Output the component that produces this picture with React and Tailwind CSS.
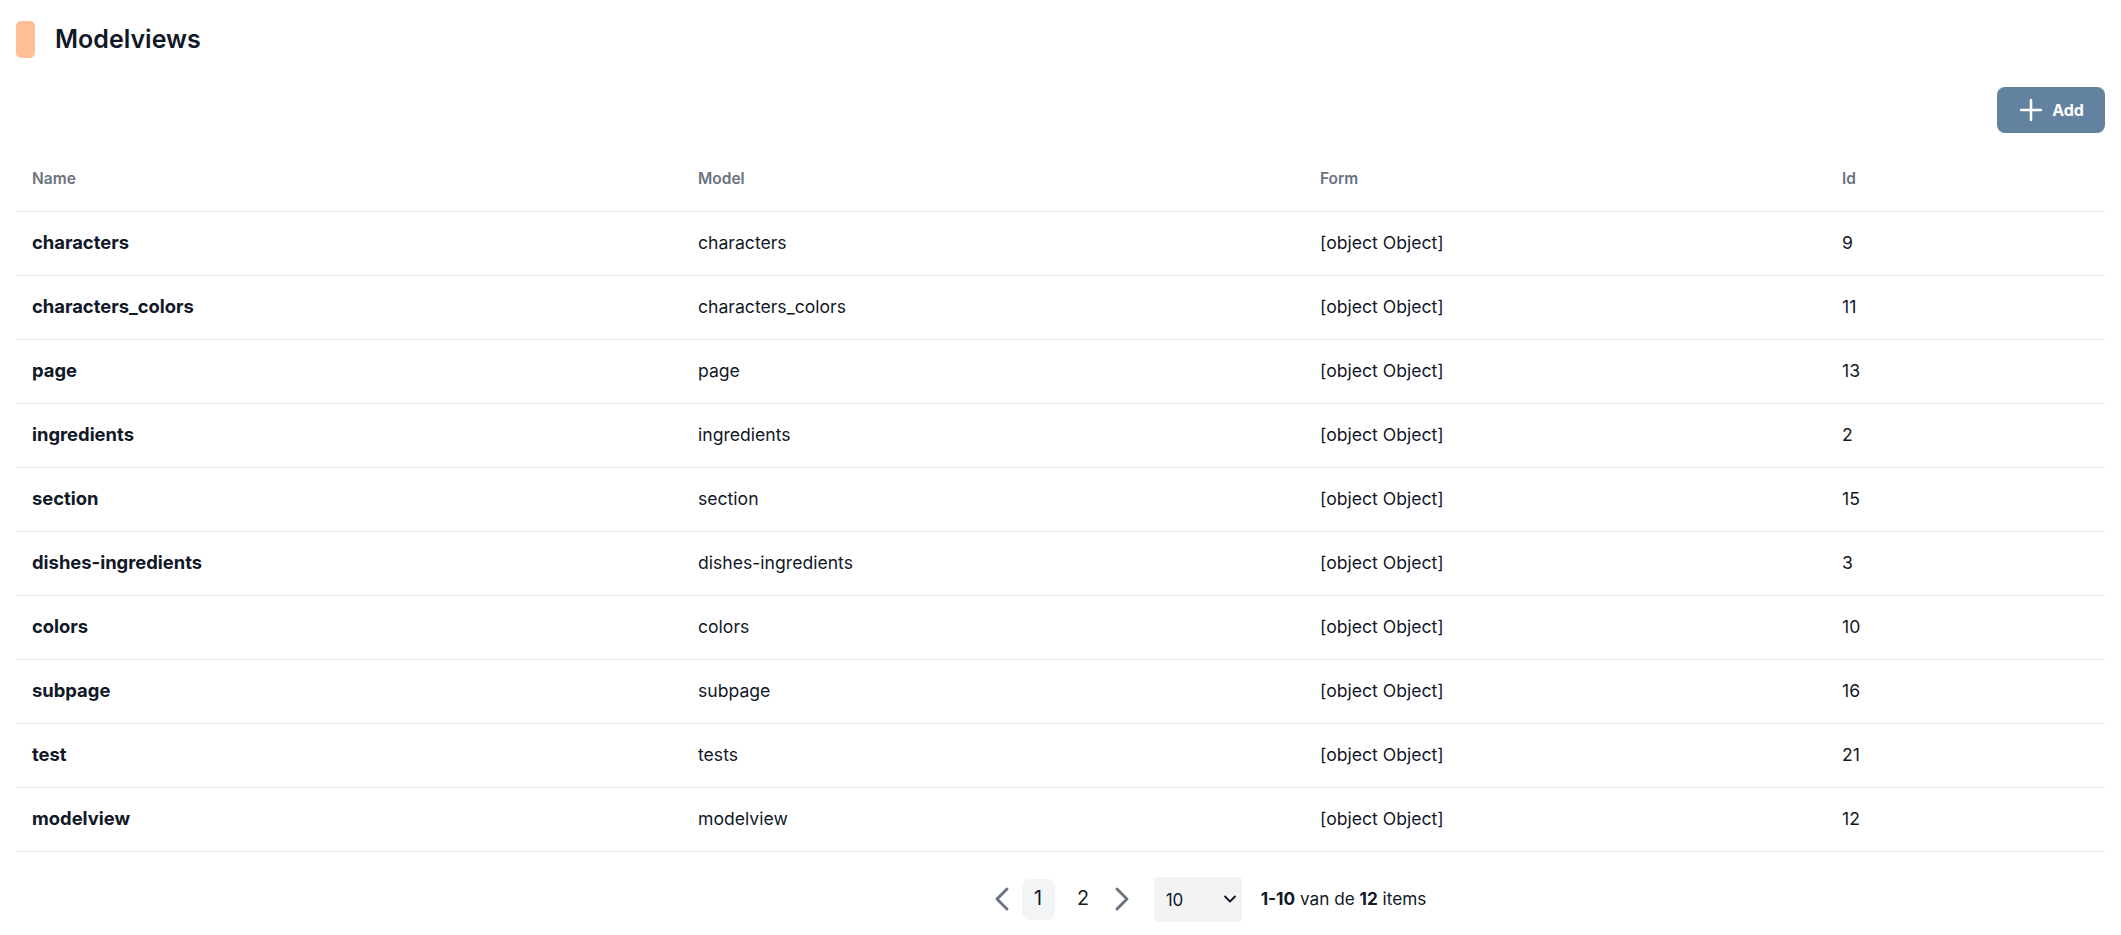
import { ChevronDown, ChevronLeft, ChevronRight, Plus } from 'lucide-react'

const rows = [
  { name: 'characters', model: 'characters', id: 9 },
  { name: 'characters_colors', model: 'characters_colors', id: 11 },
  { name: 'page', model: 'page', id: 13 },
  { name: 'ingredients', model: 'ingredients', id: 2 },
  { name: 'section', model: 'section', id: 15 },
  { name: 'dishes-ingredients', model: 'dishes-ingredients', id: 3 },
  { name: 'colors', model: 'colors', id: 10 },
  { name: 'subpage', model: 'subpage', id: 16 },
  { name: 'test', model: 'tests', id: 21 },
  { name: 'modelview', model: 'modelview', id: 12 },
]

function App() {
  return (
    <div className="min-h-screen bg-white px-4 text-[#111827]" style={{ fontFamily: 'Inter, "Noto Sans", sans-serif' }}>
      <header className="flex h-[77px] items-center gap-5 pt-[2px]">
        <span className="block h-[37px] w-[19px] rounded-[5px] bg-[#ffbf99]" />
        <h1 className="text-[25px] font-semibold">Modelviews</h1>
      </header>

      <div className="flex justify-end pt-[10px]">
        <button
          className="inline-flex h-[46px] w-[108px] items-center justify-center gap-1 rounded-[8px] bg-[#6382a0] pr-1 text-[16px] font-bold text-white"
          type="button"
        >
          <Plus size={34} strokeWidth={1.8} aria-hidden="true" />
          <span>Add</span>
        </button>
      </div>

      <table className="mt-[14px] w-[2089px] table-fixed border-collapse">
        <colgroup>
          <col className="w-[666px]" />
          <col className="w-[622px]" />
          <col className="w-[522px]" />
          <col className="w-[279px]" />
        </colgroup>
        <thead>
          <tr className="h-[64px] border-b border-[#e8e8e8] text-left text-[15.5px] text-[#6b7280]">
            <th className="px-4 font-semibold">Name</th>
            <th className="px-4 font-semibold">Model</th>
            <th className="px-4 font-semibold">Form</th>
            <th className="px-4 font-semibold">Id</th>
          </tr>
        </thead>
        <tbody>
          {rows.map((row) => (
            <tr className="h-[64px] border-b border-[#e8e8e8]" key={row.id}>
              <td className="px-4 text-[18.4px] font-bold">{row.name}</td>
              <td className="px-4 text-[17.6px]">{row.model}</td>
              <td className="px-4 text-[17.6px]">[object Object]</td>
              <td className="px-4 text-[17.6px]">{row.id}</td>
            </tr>
          ))}
        </tbody>
      </table>

      <div className="flex items-center justify-center pl-[287px] pt-[25px]">
        <button className="flex h-[41px] w-[40px] items-center justify-center text-[#6b7280]" type="button">
          <ChevronLeft size={40} strokeWidth={1.7} aria-hidden="true" />
        </button>
        <button className="h-[41px] w-[33px] rounded-[8px] bg-[#f3f4f6] text-[19.8px]" type="button">
          1
        </button>
        <button className="ml-[12px] h-[41px] w-[33px] text-[19.8px]" type="button">
          2
        </button>
        <button className="ml-[2px] flex h-[41px] w-[40px] items-center justify-center text-[#6b7280]" type="button">
          <ChevronRight size={40} strokeWidth={1.7} aria-hidden="true" />
        </button>
        <div className="ml-[12px] flex h-[45px] w-[88px] items-center justify-between rounded-[4px] bg-[#f3f3f3] pl-3 pr-[2px] text-[17px]">
          <span className="pt-1">10</span>
          <ChevronDown size={20} strokeWidth={2.2} aria-hidden="true" />
        </div>
        <p className="ml-[19px] text-[17.2px]">
          <span className="font-bold">1-10</span> van de <span className="font-bold">12</span> items
        </p>
      </div>
    </div>
  )
}

export default App
